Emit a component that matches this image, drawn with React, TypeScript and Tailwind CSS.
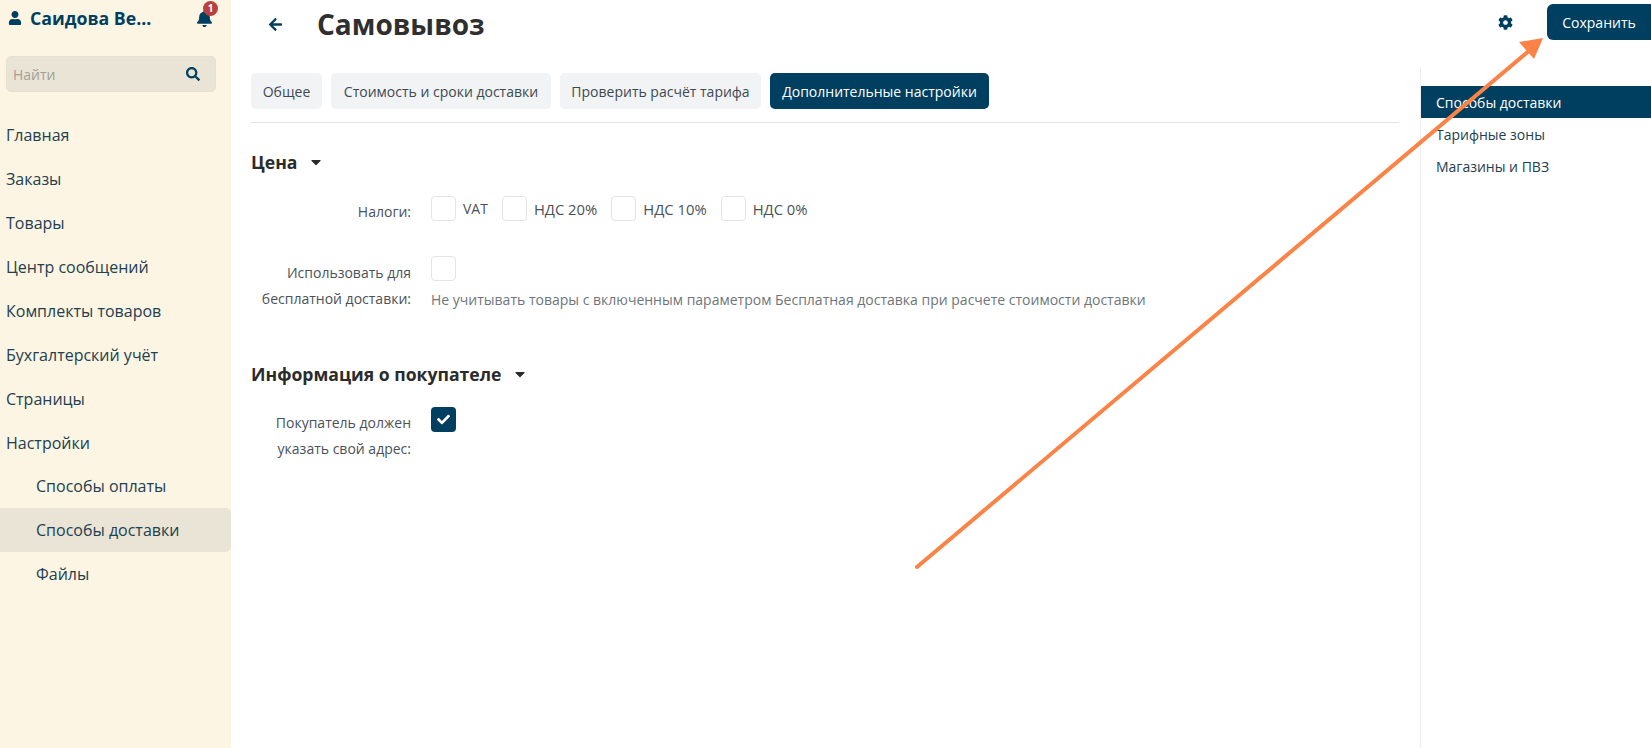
import { FaArrowLeft, FaBell, FaCaretDown, FaCheck, FaCog, FaSearch, FaUser } from 'react-icons/fa'

const navItems = ['Главная', 'Заказы', 'Товары', 'Центр сообщений', 'Комплекты товаров', 'Бухгалтерский учёт', 'Страницы', 'Настройки']

function Box({ checked }: { checked?: boolean }) {
  if (checked) {
    return (
      <span className="flex h-[25px] w-[25px] shrink-0 items-center justify-center rounded-[4px] bg-[#003f5f] text-[13px] text-white">
        <FaCheck />
      </span>
    )
  }
  return <span className="block h-[25px] w-[25px] shrink-0 rounded-[4px] border border-[#e4e4e4] bg-white" />
}

function Sidebar() {
  return (
    <aside className="flex h-[748px] w-[231px] shrink-0 flex-col bg-[#fcf5e3] text-[#23404f]">
      <div className="flex h-[36px] items-center pl-[8px] pr-[18px]">
        <FaUser className="text-[14px] text-[#003f5f]" />
        <span className="ml-[8px] flex-1 text-[17.7px] font-bold text-[#003f5f]">Саидова Ве...</span>
        <span className="relative text-[17px] text-[#003f5f]">
          <FaBell />
          <span className="absolute left-[7px] top-[-9px] flex h-[15px] w-[15px] items-center justify-center rounded-full bg-[#b8413f] text-[10px] font-bold text-white">1</span>
        </span>
      </div>
      <div className="ml-[6px] mt-[20px] flex h-[36px] w-[210px] items-center justify-between rounded-[5px] border border-[#e6e0cf] bg-[#e9e4d6] pl-[6px] pr-[15px]">
        <span className="text-[14px] text-[#a39f96]">Найти</span>
        <FaSearch className="text-[14px] text-[#003f5f]" />
      </div>
      <nav className="mt-[21px] flex flex-col text-[16px]">
        {navItems.map((item) => (
          <div key={item} className="flex h-[44px] items-center pl-[6px]">{item}</div>
        ))}
        <div className="-mt-[1px] flex h-[44px] items-center pl-[36px]">Способы оплаты</div>
        <div className="flex h-[44px] items-center rounded-r-[5px] bg-[#e9e4d6] pl-[36px]">Способы доставки</div>
        <div className="flex h-[44px] items-center pl-[36px]">Файлы</div>
      </nav>
    </aside>
  )
}

function Main() {
  return (
    <main className="min-w-0 flex-1 pl-[20px]">
      <div className="flex h-[48px] items-center pl-[17px]">
        <FaArrowLeft className="text-[15px] text-[#003f5f]" />
        <h1 className="ml-[34px] text-[28px] font-bold text-[#2f2f2f]">Самовывоз</h1>
      </div>
      <div className="mt-[25px] flex gap-[9px] border-b border-[#e3e3e3] pb-[13px] text-[14px] text-[#3d4a52]">
        <span className="flex h-[36px] w-[71px] items-center justify-center rounded-[5px] bg-[#f2f3f4]">Общее</span>
        <span className="flex h-[36px] w-[220px] items-center justify-center rounded-[5px] bg-[#f2f3f4]">Стоимость и сроки доставки</span>
        <span className="flex h-[36px] w-[201px] items-center justify-center rounded-[5px] bg-[#f2f3f4]">Проверить расчёт тарифа</span>
        <span className="flex h-[36px] w-[219px] items-center justify-center rounded-[5px] bg-[#003f5f] text-white">Дополнительные настройки</span>
      </div>

      <div className="mt-[25px] flex items-center gap-[11px] text-[#2b2b2b]">
        <h2 className="text-[17.6px] font-bold leading-[28px]">Цена</h2>
        <FaCaretDown className="text-[16px]" />
      </div>

      <div className="mt-[20px] flex text-[14px] text-[#4a5257]">
        <div className="w-[160px] pt-[5px] text-right">Налоги:</div>
        <div className="ml-[20px] flex items-start">
          <div className="mr-[14px] flex items-start gap-[7px]">
            <Box />
            <span className="mt-[3px] leading-[20px]">VAT</span>
          </div>
          <div className="mr-[14px] flex items-start gap-[7px]">
            <Box />
            <span className="mt-[3px] text-[14.8px] leading-[20px]">НДС 20%</span>
          </div>
          <div className="mr-[14px] flex items-start gap-[7px]">
            <Box />
            <span className="mt-[3px] text-[14.8px] leading-[20px]">НДС 10%</span>
          </div>
          <div className="flex items-start gap-[7px]">
            <Box />
            <span className="mt-[3px] text-[14.8px] leading-[20px]">НДС 0%</span>
          </div>
        </div>
      </div>

      <div className="mt-[34px] flex text-[14px] leading-[26px] text-[#4a5257]">
        <div className="w-[160px] pt-[4px] text-right">Использовать для<br />бесплатной доставки:</div>
        <div className="ml-[20px]">
          <Box />
          <p className="mt-[6px] text-[#6f767b]">Не учитывать товары с включенным параметром Бесплатная доставка при расчете стоимости доставки</p>
        </div>
      </div>

      <div className="mt-[47px] flex items-center gap-[11px] text-[#2b2b2b]">
        <h2 className="text-[17.6px] font-bold leading-[28px]">Информация о покупателе</h2>
        <FaCaretDown className="text-[16px]" />
      </div>

      <div className="mt-[19px] flex text-[14px] leading-[26px] text-[#4a5257]">
        <div className="w-[160px] pt-[3px] text-right">Покупатель должен<br />указать свой адрес:</div>
        <div className="ml-[20px]"><Box checked /></div>
      </div>
    </main>
  )
}

function RightPanel() {
  return (
    <div className="w-[252px] shrink-0 pl-[21px]">
      <div className="flex h-[68px] items-start">
        <FaCog className="ml-[78px] mt-[15px] text-[15px] text-[#003f5f]" />
        <button className="ml-[34px] mt-[4px] h-[36px] w-[104px] rounded-l-[6px] bg-[#003f5f] text-[14px] text-white">Сохранить</button>
      </div>
      <div className="h-[680px] border-l border-[#eeeeee] pt-[18px] text-[14px] text-[#23404f]">
        <div className="flex h-[32px] items-center bg-[#003f5f] pl-[15px] text-white">Способы доставки</div>
        <div className="flex h-[32px] items-center pl-[15px]">Тарифные зоны</div>
        <div className="flex h-[32px] items-center pl-[15px]">Магазины и ПВЗ</div>
      </div>
    </div>
  )
}

export default function App() {
  return (
    <div className="relative flex h-[748px] overflow-hidden bg-white font-['Open_Sans',sans-serif]">
      <Sidebar />
      <Main />
      <RightPanel />
      {/* annotation arrow drawn over the screenshot */}
      <svg className="pointer-events-none absolute left-0 top-0" width="1651" height="748">
        <line x1="917" y1="567" x2="1530" y2="50" stroke="#fb8346" strokeWidth="4" strokeLinecap="round" />
        <polygon points="1543,38 1534,59 1519,42" fill="#fb8346" />
      </svg>
    </div>
  )
}
